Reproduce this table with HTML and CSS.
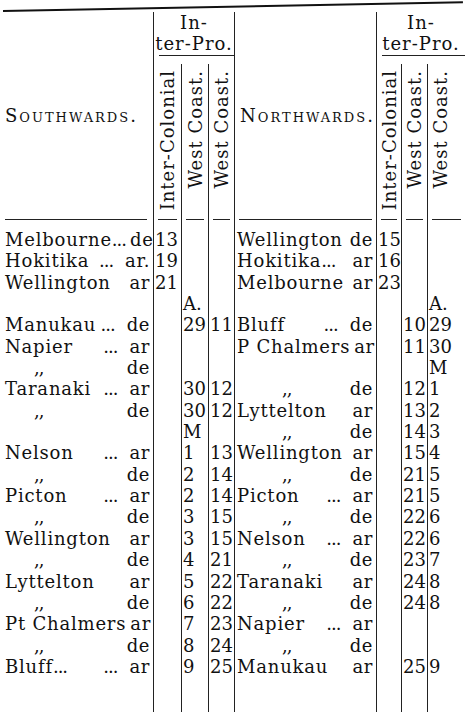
FILE: index.html
```html
<!DOCTYPE html>
<html lang="en">
<head>
<meta charset="utf-8">
<title>Steamer Time-table</title>
<link rel="stylesheet" href="styles.css">
</head>
<body>
<div class="page">
  <div class="toprule"></div>
  <div class="thead">
    <div class="hname hl"><span class="sc">Southwards.</span></div>
    <div class="hgrp g1"><div class="gtxt">In-<br>ter-Pro.</div><div class="grule"></div></div>
    <div class="hname hr"><span class="sc">Northwards.</span></div>
    <div class="hgrp g2"><div class="gtxt">In-<br>ter-Pro.</div><div class="grule"></div></div>
    <div class="hs ic"><div class="rot">Inter-Colonial</div></div>
    <div class="hs wc"><div class="rot">West Coast.</div></div>
    <div class="hs wc"><div class="rot">West Coast.</div></div>
    <div class="hs ic"><div class="rot">Inter-Colonial</div></div>
    <div class="hs wc"><div class="rot">West Coast.</div></div>
    <div class="hs wc last"><div class="rot">West Coast.</div></div>
  </div>
  <div class="rulerow">
    <div class="r"><div class="dash dl"></div></div>
    <div class="r b"><div class="dash"></div></div>
    <div class="r b"><div class="dash"></div></div>
    <div class="r b"><div class="dash"></div></div>
    <div class="r b"><div class="dash"></div></div>
    <div class="r b"><div class="dash"></div></div>
    <div class="r b"><div class="dash"></div></div>
    <div class="r b"><div class="dash"></div></div>
  </div>
  <div class="tbody">
    <!-- 1 -->
    <div class="n"><span class="pl">Melbourne<span class="td">...</span></span><span class="ad">de</span></div><div class="d">13</div><div class="d"></div><div class="d"></div>
    <div class="m"><span class="pl">Wellington</span><span class="ad">de</span></div><div class="d">15</div><div class="d"></div><div class="d"></div>
    <!-- 2 -->
    <div class="n"><span class="pl">Hokitika</span><span class="dt">...</span><span class="ad">ar.</span></div><div class="d">19</div><div class="d"></div><div class="d"></div>
    <div class="m"><span class="pl">Hokitika<span class="td">...</span></span><span class="ad">ar</span></div><div class="d">16</div><div class="d"></div><div class="d"></div>
    <!-- 3 -->
    <div class="n"><span class="pl">Wellington</span><span class="ad">ar</span></div><div class="d">21</div><div class="d"></div><div class="d"></div>
    <div class="m"><span class="pl">Melbourne</span><span class="ad">ar</span></div><div class="d">23</div><div class="d"></div><div class="d"></div>
    <!-- 4 -->
    <div class="n"></div><div class="d"></div><div class="d">A.</div><div class="d"></div>
    <div class="m"></div><div class="d"></div><div class="d"></div><div class="d">A.</div>
    <!-- 5 -->
    <div class="n"><span class="pl">Manukau</span><span class="dt">...</span><span class="ad">de</span></div><div class="d"></div><div class="d">29</div><div class="d">11</div>
    <div class="m"><span class="pl">Bluff</span><span class="dt">...</span><span class="ad">de</span></div><div class="d"></div><div class="d">10</div><div class="d">29</div>
    <!-- 6 -->
    <div class="n"><span class="pl">Napier</span><span class="dt">...</span><span class="ad">ar</span></div><div class="d"></div><div class="d"></div><div class="d"></div>
    <div class="m"><span class="pl">P Chalmers</span><span class="ad">ar</span></div><div class="d"></div><div class="d">11</div><div class="d">30</div>
    <!-- 7 -->
    <div class="n"><span class="pl dit">,,</span><span class="ad">de</span></div><div class="d"></div><div class="d"></div><div class="d"></div>
    <div class="m"></div><div class="d"></div><div class="d"></div><div class="d">M</div>
    <!-- 8 -->
    <div class="n"><span class="pl">Taranaki</span><span class="dt">...</span><span class="ad">ar</span></div><div class="d"></div><div class="d">30</div><div class="d">12</div>
    <div class="m"><span class="pl dit">,,</span><span class="ad">de</span></div><div class="d"></div><div class="d">12</div><div class="d">1</div>
    <!-- 9 -->
    <div class="n"><span class="pl dit">,,</span><span class="ad">de</span></div><div class="d"></div><div class="d">30</div><div class="d">12</div>
    <div class="m"><span class="pl">Lyttelton</span><span class="ad">ar</span></div><div class="d"></div><div class="d">13</div><div class="d">2</div>
    <!-- 10 -->
    <div class="n"></div><div class="d"></div><div class="d">M</div><div class="d"></div>
    <div class="m"><span class="pl dit">,,</span><span class="ad">de</span></div><div class="d"></div><div class="d">14</div><div class="d">3</div>
    <!-- 11 -->
    <div class="n"><span class="pl">Nelson</span><span class="dt">...</span><span class="ad">ar</span></div><div class="d"></div><div class="d">1</div><div class="d">13</div>
    <div class="m"><span class="pl">Wellington</span><span class="ad">ar</span></div><div class="d"></div><div class="d">15</div><div class="d">4</div>
    <!-- 12 -->
    <div class="n"><span class="pl dit">,,</span><span class="ad">de</span></div><div class="d"></div><div class="d">2</div><div class="d">14</div>
    <div class="m"><span class="pl dit">,,</span><span class="ad">de</span></div><div class="d"></div><div class="d">21</div><div class="d">5</div>
    <!-- 13 -->
    <div class="n"><span class="pl">Picton</span><span class="dt">...</span><span class="ad">ar</span></div><div class="d"></div><div class="d">2</div><div class="d">14</div>
    <div class="m"><span class="pl">Picton</span><span class="dt">...</span><span class="ad">ar</span></div><div class="d"></div><div class="d">21</div><div class="d">5</div>
    <!-- 14 -->
    <div class="n"><span class="pl dit">,,</span><span class="ad">de</span></div><div class="d"></div><div class="d">3</div><div class="d">15</div>
    <div class="m"><span class="pl dit">,,</span><span class="ad">de</span></div><div class="d"></div><div class="d">22</div><div class="d">6</div>
    <!-- 15 -->
    <div class="n"><span class="pl">Wellington</span><span class="ad">ar</span></div><div class="d"></div><div class="d">3</div><div class="d">15</div>
    <div class="m"><span class="pl">Nelson</span><span class="dt">...</span><span class="ad">ar</span></div><div class="d"></div><div class="d">22</div><div class="d">6</div>
    <!-- 16 -->
    <div class="n"><span class="pl dit">,,</span><span class="ad">de</span></div><div class="d"></div><div class="d">4</div><div class="d">21</div>
    <div class="m"><span class="pl dit">,,</span><span class="ad">de</span></div><div class="d"></div><div class="d">23</div><div class="d">7</div>
    <!-- 17 -->
    <div class="n"><span class="pl">Lyttelton</span><span class="ad">ar</span></div><div class="d"></div><div class="d">5</div><div class="d">22</div>
    <div class="m"><span class="pl">Taranaki</span><span class="ad">ar</span></div><div class="d"></div><div class="d">24</div><div class="d">8</div>
    <!-- 18 -->
    <div class="n"><span class="pl dit">,,</span><span class="ad">de</span></div><div class="d"></div><div class="d">6</div><div class="d">22</div>
    <div class="m"><span class="pl dit">,,</span><span class="ad">de</span></div><div class="d"></div><div class="d">24</div><div class="d">8</div>
    <!-- 19 -->
    <div class="n"><span class="pl">Pt Chalmers</span><span class="ad">ar</span></div><div class="d"></div><div class="d">7</div><div class="d">23</div>
    <div class="m"><span class="pl">Napier</span><span class="dt">...</span><span class="ad">ar</span></div><div class="d"></div><div class="d"></div><div class="d"></div>
    <!-- 20 -->
    <div class="n"><span class="pl dit">,,</span><span class="ad">de</span></div><div class="d"></div><div class="d">8</div><div class="d">24</div>
    <div class="m"><span class="pl dit">,,</span><span class="ad">de</span></div><div class="d"></div><div class="d"></div><div class="d"></div>
    <!-- 21 -->
    <div class="n"><span class="pl">Bluff<span class="td">...</span></span><span class="dt">...</span><span class="ad">ar</span></div><div class="d"></div><div class="d">9</div><div class="d">25</div>
    <div class="m"><span class="pl">Manukau</span><span class="ad">ar</span></div><div class="d"></div><div class="d">25</div><div class="d">9</div>
    <!-- filler -->
    <div class="n"></div><div class="d"></div><div class="d"></div><div class="d"></div>
    <div class="m"></div><div class="d"></div><div class="d"></div><div class="d"></div>
  </div>
</div>
</body>
</html>
```

FILE: styles.css
```css
* { box-sizing: border-box; }

body {
  margin: 0;
  background: #ffffff;
  color: #111111;
  font-family: "DejaVu Serif", "Liberation Serif", serif;
  font-size: 18px;
  letter-spacing: 0.6px;
}

.page {
  width: 465px;
  height: 712px;
  padding-left: 3px;
  overflow: hidden;
}

.toprule {
  margin-top: 10px;
  width: 460px;
  height: 2px;
  background: #111;
  transform-origin: 0 50%;
  transform: rotate(-1.1deg);
}

.thead,
.rulerow,
.tbody {
  display: grid;
  grid-template-columns: 150px 28px 27px 26px 142px 25px 26px 38px;
}

.thead {
  grid-template-rows: 44px 163px;
}

.hname {
  grid-row: 1 / 3;
  display: flex;
  align-items: center;
  white-space: nowrap;
}
.hl { grid-column: 1; padding-left: 2px; }
.hr { grid-column: 5; padding-left: 5px; border-left: 1px solid #222; }

.sc {
  font-variant: small-caps;
  letter-spacing: 2px;
}

.hgrp {
  grid-row: 1;
  border-left: 1px solid #222;
  display: flex;
  flex-direction: column;
}
.g1 { grid-column: 2 / 5; }
.g2 { grid-column: 6 / 9; }

.gtxt {
  line-height: 21px;
  text-align: center;
  white-space: nowrap;
  letter-spacing: 1px;
}

.grule {
  margin: 1px 0 0 5px;
  height: 1px;
  background: #222;
}

.hs {
  display: flex;
  justify-content: center;
  align-items: flex-start;
  padding-top: 14px;
}
.hs.ic { border-left: 1px solid #222; }
.hs.wc {
  margin-top: 8px;
  padding-top: 6px;
  border-left: 1px solid #222;
}
.hs.last { padding-right: 13px; }

.rot {
  writing-mode: vertical-rl;
  transform: rotate(180deg);
  line-height: 21px;
  white-space: nowrap;
  letter-spacing: 1px;
}

.rulerow { height: 10px; }
.r { height: 10px; }
.r.b { border-left: 1px solid #222; }
.dash {
  height: 1px;
  margin: 0 4px;
  background: #222;
}
.dash.dl { margin: 0 6px 0 2px; }

.tbody {
  grid-template-rows: repeat(21, 21.35px) 35px;
  line-height: 21.35px;
}

.n,
.m {
  display: flex;
  white-space: nowrap;
}
.n { padding: 0 3px 0 2px; }
.m { padding: 0 3px 0 2px; border-left: 1px solid #222; }

.pl { margin-right: auto; letter-spacing: 0.8px; }
.ad { margin-left: 4px; }
.dt { margin-right: 8px; letter-spacing: -1px; }
.td { letter-spacing: -1px; }
.dit { letter-spacing: -1px; }
.n .dit { padding-left: 29px; }
.m .dit { padding-left: 45px; }

.d {
  border-left: 1px solid #222;
  padding-left: 1px;
  letter-spacing: 0;
  white-space: nowrap;
}
```
